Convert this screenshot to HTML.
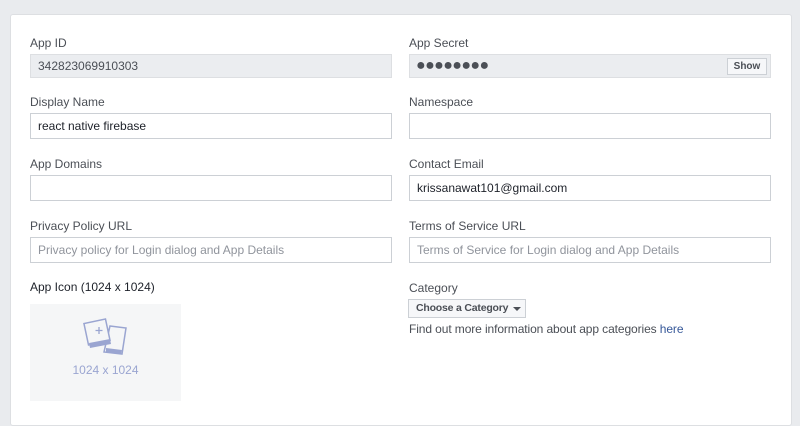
<!DOCTYPE html>
<html><head><style>
body{margin:0;width:800px;height:411px;background:#e9ebee;font-family:"Liberation Sans",Helvetica,sans-serif;position:relative;overflow:hidden;color:#1d2129}
.card{position:absolute;left:10px;top:14px;width:780px;height:410px;background:#fff;border:1px solid #dddfe2;border-radius:3px}
.l{position:absolute;font-size:12px;color:#4b4f56;white-space:nowrap}
.i{position:absolute;box-sizing:border-box;height:26px;border:1px solid #ccd0d5;background:#fff;font-size:12px;line-height:24px;padding-left:7px;color:#1d2129;white-space:nowrap}
.g{background:#ebedf0;border-color:#dddfe2;color:#4b4f56}
.ph{color:#90949c}
</style></head><body>
<div class="card"></div>
<div class="l" style="left:30px;top:36px">App ID</div>
<div class="i g" style="left:30px;top:54px;width:362px;height:24px;line-height:22px">342823069910303</div>
<div class="l" style="left:409px;top:36px">App Secret</div>
<div class="i g" style="left:409px;top:54px;width:362px;height:24px;line-height:22px;font-size:16px;letter-spacing:-0.6px;color:#4b4f56;padding-left:6px">●●●●●●●●</div>
<div style="position:absolute;left:727px;top:58px;width:40px;height:17px;background:#f6f7f9;border:1px solid #ccd0d5;box-sizing:border-box;font-size:10px;font-weight:bold;text-align:center;line-height:15px;color:#4b4f56">Show</div>
<div class="l" style="left:30px;top:95px">Display Name</div>
<div class="i" style="left:30px;top:113px;width:362px">react native firebase</div>
<div class="l" style="left:409px;top:95px">Namespace</div>
<div class="i" style="left:409px;top:113px;width:362px"></div>
<div class="l" style="left:30px;top:157px">App Domains</div>
<div class="i" style="left:30px;top:175px;width:362px"></div>
<div class="l" style="left:409px;top:157px">Contact Email</div>
<div class="i" style="left:409px;top:175px;width:362px">krissanawat101@gmail.com</div>
<div class="l" style="left:30px;top:219px">Privacy Policy URL</div>
<div class="i ph" style="left:30px;top:237px;width:362px">Privacy policy for Login dialog and App Details</div>
<div class="l" style="left:409px;top:219px">Terms of Service URL</div>
<div class="i ph" style="left:409px;top:237px;width:362px">Terms of Service for Login dialog and App Details</div>
<div class="l" style="left:30px;top:280px;color:#1d2129">App Icon (1024 x 1024)</div>
<div style="position:absolute;left:30px;top:304px;width:151px;height:97px;background:#f5f6f7"></div>
<svg style="position:absolute;left:82px;top:316px" width="46" height="42" viewBox="0 0 46 42">
<path d="M28 10 L44 12 L40 38 L22 36 Z" fill="none" stroke="#9aa5d1" stroke-width="1.5"/>
<path d="M24 32 L40 34 L39 38 L24 36 Z" fill="#9aa5d1"/>
<rect x="4" y="5" width="22" height="22" transform="rotate(-12 15 16)" fill="#f5f6f7" stroke="#9aa5d1" stroke-width="1.5"/>
<path d="M7 27 L28 23 L29 28 L8 32 Z" fill="#9aa5d1"/>
<path d="M17 11v7M13.5 14.5h7" stroke="#9aa5d1" stroke-width="1.3"/>
</svg>
<div style="position:absolute;left:30px;top:363px;width:151px;text-align:center;font-size:12px;color:#9aa5d1">1024 x 1024</div>
<div class="l" style="left:409px;top:281px">Category</div>
<div style="position:absolute;left:408px;top:299px;width:118px;height:19px;box-sizing:border-box;background:#f6f7f9;border:1px solid #ccd0d5;font-size:10.5px;letter-spacing:-0.2px;font-weight:bold;line-height:17px;padding-left:7px;color:#4b4f56;white-space:nowrap;overflow:hidden">Choose a Category<svg width="8" height="5" style="position:absolute;left:104px;top:7px"><path d="M0 0h8L4 4z" fill="#4b4f56"/></svg></div>
<div class="l" style="left:409px;top:322px;color:#4b4f56;letter-spacing:-0.1px">Find out more information about app categories <span style="color:#365899">here</span></div>
</body></html>
